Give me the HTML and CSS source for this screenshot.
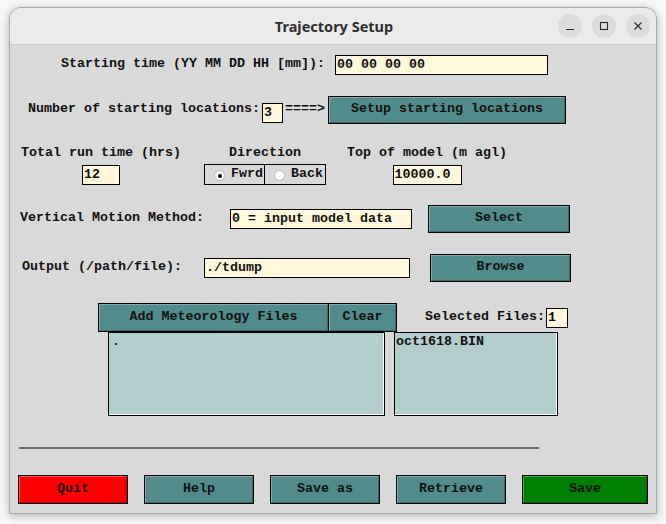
FILE: index.html
```html
<!DOCTYPE html>
<html lang="en">
<head>
<meta charset="utf-8">
<title>Trajectory Setup</title>
<link rel="stylesheet" href="styles.css">
</head>
<body>
<div class="window">
  <div class="titlebar">
    <div class="title">Trajectory Setup</div>
    <div class="controls">
      <span class="ctl"><svg width="24" height="24" viewBox="0 0 24 24"><line x1="8" y1="15.5" x2="16" y2="15.5" stroke="#2e2e2e" stroke-width="1.2"/></svg></span>
      <span class="ctl"><svg width="24" height="24" viewBox="0 0 24 24"><rect x="8.5" y="8.5" width="7" height="7" fill="none" stroke="#2e2e2e" stroke-width="1.1"/></svg></span>
      <span class="ctl"><svg width="24" height="24" viewBox="0 0 24 24"><path d="M8.5 8.5 L15.5 15.5 M15.5 8.5 L8.5 15.5" stroke="#2e2e2e" stroke-width="1.2"/></svg></span>
    </div>
  </div>
  <div class="content">
    <div class="row row1">
      <span class="lbl">Starting time (YY MM DD HH [mm]):</span>
      <span class="entry e-time">00 00 00 00</span>
    </div>
    <div class="row row2">
      <span class="lbl">Number of starting locations:</span>
      <span class="entry e-num">3</span>
      <span class="lbl arrow">====&gt;</span>
      <span class="btn b-setup">Setup starting locations</span>
    </div>
    <div class="row row3">
      <div class="col c1">
        <span class="lbl">Total run time (hrs)</span>
        <span class="entry e-run">12</span>
      </div>
      <div class="col c2">
        <span class="lbl">Direction</span>
        <div class="radios">
          <span class="radio"><span class="dot on"></span>Fwrd</span>
          <span class="radio r2"><span class="dot"></span>Back</span>
        </div>
      </div>
      <div class="col c3">
        <span class="lbl">Top of model (m agl)</span>
        <span class="entry e-top">10000.0</span>
      </div>
    </div>
    <div class="row row4">
      <span class="lbl">Vertical Motion Method:</span>
      <span class="entry e-vert">0 = input model data</span>
      <span class="btn b-select">Select</span>
    </div>
    <div class="row row5">
      <span class="lbl">Output (/path/file):</span>
      <span class="entry e-out">./tdump</span>
      <span class="btn b-browse">Browse</span>
    </div>
    <div class="row row6">
      <span class="btn b-add">Add Meteorology Files</span>
      <span class="btn b-clear">Clear</span>
      <span class="lbl sel">Selected Files:</span>
      <span class="entry e-sel">1</span>
    </div>
    <div class="row row7">
      <div class="list l-left">.</div>
      <div class="list l-right">oct1618.BIN</div>
    </div>
    <div class="dash">_________________________________________________________________</div>
    <div class="row bottom">
      <span class="btn quit">Quit</span>
      <span class="btn">Help</span>
      <span class="btn">Save as</span>
      <span class="btn">Retrieve</span>
      <span class="btn save">Save</span>
    </div>
  </div>
</div>
</body>
</html>
```

FILE: styles.css
```css
* { box-sizing: border-box; }
html, body { margin: 0; padding: 0; }
body {
  background: #f7f7f7;
  width: 666px;
  height: 524px;
  overflow: hidden;
  padding-top: 7px;
  padding-left: 9px;
  font-family: "Liberation Mono", "Courier New", monospace;
  font-weight: bold;
  font-size: 13.33px;
  color: #111;
}
.window {
  width: 648px;
  height: 507px;
  border: 1px solid #a8a8a8;
  border-radius: 12px 12px 0 0;
  background: #d9d9d9;
  overflow: hidden;
  box-shadow: 0 2px 8px rgba(0, 0, 0, 0.28);
}
.titlebar {
  height: 37px;
  background: #ebebeb;
  border-bottom: 1px solid #cbcbcb;
  display: flex;
  align-items: center;
  justify-content: center;
  position: relative;
}
.title {
  font-family: "Noto Sans", "DejaVu Sans", sans-serif;
  font-weight: bold;
  font-size: 14.5px;
  color: #2e2e2e;
  margin-left: 2px;
}
.controls {
  position: absolute;
  right: 6px;
  top: 6px;
  display: flex;
  gap: 10px;
}
.ctl {
  width: 24px;
  height: 24px;
  border-radius: 50%;
  background: #dcdcdc;
  display: block;
}
.ctl svg { display: block; }
.content { display: flex; flex-direction: column; }
.row { display: flex; align-items: center; }
.lbl { white-space: pre; line-height: 16px; }
.row > .lbl { padding-bottom: 2px; }
.entry {
  display: block;
  background: #fff8dc;
  border: 1px solid #000;
  height: 20px;
  line-height: 17px;
  padding-left: 1px;
  white-space: pre;
}
.btn {
  display: flex;
  align-items: center;
  justify-content: center;
  background: #528b8b;
  border: 1px solid #000;
  box-shadow: inset 1px 1px 0 rgba(255,255,255,0.28), inset -1px -1px 0 rgba(0,0,0,0.25);
  height: 28px;
  padding-bottom: 3px;
  white-space: pre;
}
.row1 { margin-top: 10px; height: 20px; padding-left: 51px; }
.e-time { width: 213px; margin-left: 10px; }
.row2 { margin-top: 21px; height: 28px; padding-left: 18px; }
.e-num { width: 21px; margin-left: 2px; margin-top: 6px; height: 20px; }
.arrow { margin-left: 2px; }
.b-setup { width: 238px; margin-left: 3px; }
.row3 { margin-top: 21px; padding-left: 12px; align-items: flex-start; }
.col { display: flex; flex-direction: column; align-items: center; }
.col .entry, .col .radios { margin-top: 4px; }
.c1 { width: 158px; }
.c2 { width: 122px; margin-left: 24px; }
.c3 { width: 158px; margin-left: 22px; }
.e-run { width: 38px; }
.e-top { width: 69px; }
.radios { display: flex; margin-top: 3px !important; }
.radio {
  display: flex;
  align-items: center;
  width: 61px;
  height: 21px;
  border: 1px solid #000;
  padding-left: 9px;
  line-height: 16px;
  padding-bottom: 1px;
}
.r2 { margin-left: -1px; width: 62px; }
.dot {
  width: 11px;
  height: 11px;
  border-radius: 50%;
  border: 1px solid #b8b8b8;
  background: #fff;
  margin-right: 6px;
  margin-top: 3px;
  display: flex;
  align-items: center;
  justify-content: center;
  flex: none;
}
.dot.on::after {
  content: "";
  width: 4px;
  height: 4px;
  border-radius: 50%;
  background: #000;
}
.row4 { margin-top: 20px; height: 28px; padding-left: 10px; }
.e-vert { width: 182px; margin-left: 26px; }
.b-select { width: 142px; margin-left: 16px; }
.row5 { margin-top: 21px; height: 28px; padding-left: 12px; }
.e-out { width: 206px; margin-left: 22px; }
.b-browse { width: 141px; margin-left: 20px; }
.row6 { margin-top: 21px; height: 29px; padding-left: 88px; }
.b-add { width: 231px; height: 29px; }
.b-clear { width: 69px; height: 29px; margin-left: -1px; }
.sel { margin-left: 28px; }
.e-sel { width: 22px; margin-left: 1px; margin-top: 0; }
.row7 { height: 84px; padding-left: 98px; align-items: stretch; }
.list {
  background: #b4cdcd;
  border: 1px solid #000;
  box-shadow: inset -1px -1px 0 #fff;
  padding: 1px 2px;
  line-height: 16px;
}
.l-left { width: 277px; padding-left: 3px; }
.l-right { width: 164px; margin-left: 9px; padding-left: 1px; }
.dash {
  margin-top: 19px;
  height: 16px;
  line-height: 16px;
  padding-left: 9px;
  white-space: pre;
  color: #000;
  text-shadow: 0 0.6px 0 #000;
}
.bottom { margin-top: 24px; padding-left: 8px; gap: 16px; }
.bottom .btn { width: 110px; height: 29px; }
.bottom .quit { background: #ff0000; }
.bottom .save { background: #008000; width: 126px; }
```
